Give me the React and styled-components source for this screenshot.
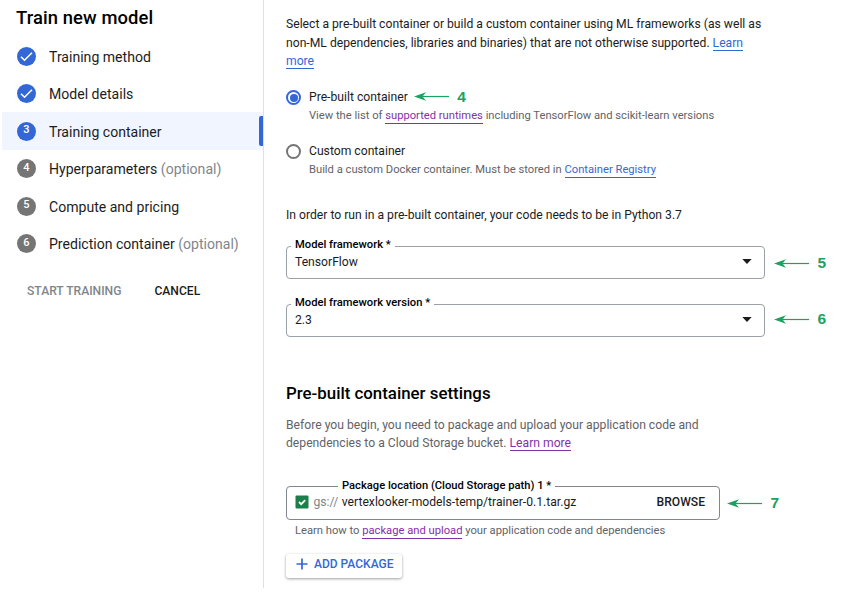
import React from "react";
import styled, { createGlobalStyle } from "styled-components";

const GlobalStyle = createGlobalStyle`
  * { box-sizing: border-box; }
  body {
    margin: 0;
    background: #fff;
    color: #1c1c1d;
    font-family: Roboto, "Liberation Sans", sans-serif;
    overflow: hidden;
  }
`;

const BLUE = "#3367d6";
const PURPLE = "#8430a8";
const GREEN = "#1ba260";

const Page = styled.div`
  display: flex;
  width: 845px;
  height: 597px;
`;

const Sidebar = styled.aside`
  width: 264px;
  height: 588px;
  flex: none;
  padding-left: 2px;
  border-right: 1px solid #e0e0e0;
`;

const PageTitle = styled.h1`
  margin: 0;
  padding-left: 14px;
  height: 37.6px;
  color: #000;
  font-size: 18.4px;
  font-weight: 500;
  line-height: 35px;
  letter-spacing: 0.1px;
`;

const Steps = styled.ol`
  margin: 0;
  padding: 0;
  list-style: none;
`;

const Step = styled.li`
  display: flex;
  align-items: center;
  justify-content: space-between;
  height: 37.45px;
  padding-left: 15px;
  background: ${(p) => (p.$active ? "#f0f5ff" : "transparent")};
`;

const StepLabel = styled.span`
  flex: 1;
  margin-left: 13px;
  padding-top: 1px;
  font-size: 14.07px;
  line-height: 20px;
  white-space: nowrap;
`;

const Optional = styled.span`
  color: #80868b;
`;

const StepBadge = styled.span`
  display: flex;
  align-items: center;
  justify-content: center;
  width: 19px;
  height: 19px;
  border-radius: 50%;
  background: ${(p) => (p.$blue ? BLUE : "#757575")};
  color: #fff;
  font-size: 11px;
  font-weight: 500;
  line-height: 16px;
  padding-bottom: ${(p) => (p.$number ? "2px" : "0")};
`;

const ActiveBar = styled.span`
  width: 4px;
  height: 30px;
  border-radius: 2px 0 0 2px;
  background: ${BLUE};
`;

const SidebarActions = styled.div`
  display: flex;
  gap: 33px;
  padding: 18.6px 0 0 25px;
`;

const TextButton = styled.button`
  padding: 0;
  border: 0;
  background: none;
  color: ${(p) => (p.$disabled ? "#80868b" : "#1c1c1d")};
  font-family: inherit;
  font-size: 12.1px;
  font-weight: 500;
  line-height: 20px;
  white-space: nowrap;
`;

const Main = styled.main`
  flex: 1;
  padding: 15px 0 0 22px;
`;

const Paragraph = styled.p`
  margin: 0;
  color: ${(p) => (p.$muted ? "#5f6368" : "#1c1c1d")};
  font-size: 12.17px;
  line-height: 18.7px;
  white-space: nowrap;
`;

const Intro = styled(Paragraph)`
  height: 72px;
`;

const Link = styled.a`
  display: inline-block;
  height: 15px;
  line-height: 14px;
  color: ${(p) => (p.$visited ? PURPLE : BLUE)};
  border-bottom: 1px solid currentColor;
`;

const RadioOption = styled.label`
  display: grid;
  grid-template-columns: 15px 1fr;
  column-gap: 8px;
  height: 54px;
`;

const Radio = styled.span`
  display: flex;
  align-items: center;
  justify-content: center;
  width: 15px;
  height: 15px;
  margin-top: 3px;
  border: 2px solid ${(p) => (p.$checked ? BLUE : "#757575")};
  border-radius: 50%;

  &::after {
    content: "";
    width: 8px;
    height: 8px;
    flex: none;
    border-radius: 50%;
    background: ${(p) => (p.$checked ? BLUE : "transparent")};
  }
`;

const OptionTitle = styled.div`
  display: flex;
  align-items: center;
  gap: 6px;
  height: 19px;
  font-size: 12.17px;
`;

const Hint = styled.div`
  color: #5f6368;
  font-size: 11.2px;
  line-height: 19px;
  white-space: nowrap;
`;

const Requirement = styled(Paragraph)`
  margin-top: 11px;
`;

const FieldRow = styled.div`
  display: flex;
  align-items: center;
  gap: ${(p) => p.$gap || "9px"};
  margin-top: ${(p) => p.$top};
`;

const Field = styled.div`
  position: relative;
  display: flex;
  align-items: center;
  width: ${(p) => p.$width};
  height: ${(p) => p.$height || "33px"};
  padding: ${(p) => p.$padding || "0 12px 1px 8px"};
  border: 1px solid ${(p) => p.$border || "#9aa0a6"};
  border-radius: 4px;
`;

const FieldLabel = styled.span`
  position: absolute;
  top: ${(p) => p.$top || "-10px"};
  left: ${(p) => p.$left};
  padding: 0 4px;
  background: #fff;
  color: #000;
  font-size: 11.2px;
  font-weight: 500;
  line-height: 15px;
  white-space: nowrap;
`;

const FieldValue = styled.span`
  flex: 1;
  font-size: 12.17px;
  line-height: 18px;
  white-space: nowrap;
`;

const Prefix = styled.span`
  margin: 0 3.5px 0 4.5px;
  color: #80868b;
  font-size: 12.17px;
`;

const Marker = styled.span`
  display: inline-flex;
  align-items: center;
  gap: 8.5px;
  margin-top: ${(p) => p.$shift || "0"};
  color: ${GREEN};
  font-family: "Liberation Sans", Arial, sans-serif;
  font-size: 15.5px;
  font-weight: 700;
  line-height: 18px;
`;

const SectionTitle = styled.h2`
  margin: 46px 0 13px;
  color: #000;
  font-size: 16.85px;
  font-weight: 500;
  line-height: 20px;
`;

const PackageHint = styled(Hint)`
  margin: 1px 0 0 9px;
`;

const AddButton = styled.button`
  display: flex;
  align-items: center;
  gap: 6px;
  width: 116px;
  height: 24px;
  margin-top: 14px;
  padding: 0 0 4px 10px;
  border: 0;
  border-radius: 3px;
  background: #fff;
  box-shadow: 0 1px 3px rgba(0, 0, 0, 0.38);
  color: ${BLUE};
  font-family: inherit;
  font-size: 12px;
  font-weight: 500;
  white-space: nowrap;
`;

function Callout({ number, shift }) {
  return (
    <Marker $shift={shift}>
      <svg width="35" height="9" viewBox="0 0 35 9">
        <path d="M0 4.5 L12 0.3 L8.5 4.5 L12 8.7 Z" fill={GREEN} />
        <path d="M8 4.5 H35" stroke={GREEN} strokeWidth="1.2" />
      </svg>
      {number}
    </Marker>
  );
}

function Caret() {
  return (
    <svg width="10" height="5" viewBox="0 0 10 5">
      <path d="M0.3 0 H9.7 L5 5 Z" fill="#1c1c1d" />
    </svg>
  );
}

const steps = [
  { label: "Training method", done: true },
  { label: "Model details", done: true },
  { label: "Training container", active: true },
  { label: "Hyperparameters", optional: true },
  { label: "Compute and pricing" },
  { label: "Prediction container", optional: true },
];

export default function App() {
  return (
    <Page>
      <GlobalStyle />
      <Sidebar>
        <PageTitle>Train new model</PageTitle>
        <Steps>
          {steps.map((s, i) => (
            <Step key={s.label} $active={s.active}>
              <StepBadge $blue={s.done || s.active} $number={!s.done}>
                {s.done ? (
                  <svg width="19" height="19" viewBox="0 0 19 19">
                    <path d="M4 9.8 L7.5 13.2 L15 5.7" fill="none" stroke="#fff" strokeWidth="1.6" />
                  </svg>
                ) : (
                  i + 1
                )}
              </StepBadge>
              <StepLabel>
                {s.label}
                {s.optional && <Optional> (optional)</Optional>}
              </StepLabel>
              {s.active && <ActiveBar />}
            </Step>
          ))}
        </Steps>
        <SidebarActions>
          <TextButton $disabled>START TRAINING</TextButton>
          <TextButton>CANCEL</TextButton>
        </SidebarActions>
      </Sidebar>
      <Main>
        <Intro>
          Select a pre-built container or build a custom container using ML frameworks (as well as
          <br />
          non-ML dependencies, libraries and binaries) that are not otherwise supported. <Link>Learn</Link>
          <br />
          <Link>more</Link>
        </Intro>
        <RadioOption>
          <Radio $checked />
          <div>
            <OptionTitle>
              Pre-built container <Callout number={4} />
            </OptionTitle>
            <Hint>
              View the list of <Link $visited>supported runtimes</Link> including TensorFlow and scikit-learn versions
            </Hint>
          </div>
        </RadioOption>
        <RadioOption>
          <Radio />
          <div>
            <OptionTitle>Custom container</OptionTitle>
            <Hint>
              Build a custom Docker container. Must be stored in <Link>Container Registry</Link>
            </Hint>
          </div>
        </RadioOption>
        <Requirement>In order to run in a pre-built container, your code needs to be in Python 3.7</Requirement>
        <FieldRow $top="21px">
          <Field $width="479px">
            <FieldLabel $left="4px">Model framework *</FieldLabel>
            <FieldValue>TensorFlow</FieldValue>
            <Caret />
          </Field>
          <Callout number={5} shift="2px" />
        </FieldRow>
        <FieldRow $top="25px">
          <Field $width="479px">
            <FieldLabel $left="4px">Model framework version *</FieldLabel>
            <FieldValue>2.3</FieldValue>
            <Caret />
          </Field>
          <Callout number={6} shift="-2px" />
        </FieldRow>
        <SectionTitle>Pre-built container settings</SectionTitle>
        <Paragraph $muted>
          Before you begin, you need to package and upload your application code and
          <br />
          dependencies to a Cloud Storage bucket. <Link $visited>Learn more</Link>
        </Paragraph>
        <FieldRow $top="33px" $gap="7px">
          <Field $width="434px" $height="34px" $padding="0 14px 2px 8px" $border="#80868b">
            <FieldLabel $left="51px" $top="-9px">Package location (Cloud Storage path) 1 *</FieldLabel>
            <svg width="14" height="14" viewBox="0 0 14 14">
              <rect x="0.5" y="0.5" width="13" height="13" rx="1" fill="#188048" />
              <path d="M4 7 L6.2 9.2 L10.2 5.2" fill="none" stroke="#fff" strokeWidth="1.8" />
            </svg>
            <Prefix>gs://</Prefix>
            <FieldValue>vertexlooker-models-temp/trainer-0.1.tar.gz</FieldValue>
            <TextButton>BROWSE</TextButton>
          </Field>
          <Callout number={7} />
        </FieldRow>
        <PackageHint>
          Learn how to <Link $visited>package and upload</Link> your application code and dependencies
        </PackageHint>
        <AddButton>
          <svg width="12" height="12" viewBox="0 0 12 12">
            <path d="M6 0.5 V11.5 M0.5 6 H11.5" stroke={BLUE} strokeWidth="1.7" />
          </svg>
          ADD PACKAGE
        </AddButton>
      </Main>
    </Page>
  );
}
